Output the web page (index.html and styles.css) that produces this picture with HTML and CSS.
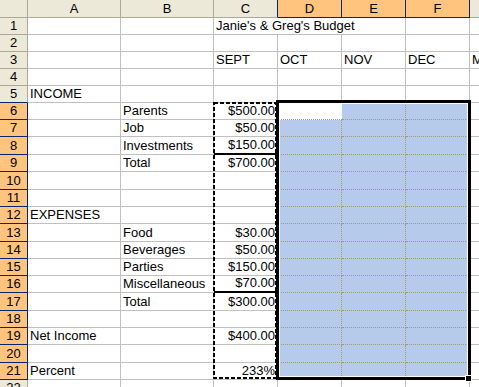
FILE: index.html
```html
<!DOCTYPE html>
<html lang="en">
<head>
    <meta charset="UTF-8">
    <title>Janie's &amp; Greg's Budget</title>
    <link rel="stylesheet" href="styles.css">
</head>
<body>
    <div class="sheet">
        <!-- column headers -->
        <div class="row head">
            <div class="rh corner"></div>
            <div class="ch">A</div>
            <div class="ch">B</div>
            <div class="ch edge">C</div>
            <div class="ch on">D</div>
            <div class="ch on">E</div>
            <div class="ch on">F</div>
            <div class="ch"></div>
        </div>

        <div class="row">
            <div class="rh">1</div>
            <div class="cell"></div>
            <div class="cell"></div>
            <div class="cell wide">Janie's &amp; Greg's Budget</div>
            <div class="cell"></div>
            <div class="cell"></div>
        </div>
        <div class="row">
            <div class="rh">2</div>
            <div class="cell"></div><div class="cell"></div><div class="cell"></div>
            <div class="cell"></div><div class="cell"></div><div class="cell"></div><div class="cell"></div>
        </div>
        <div class="row">
            <div class="rh">3</div>
            <div class="cell"></div>
            <div class="cell"></div>
            <div class="cell">SEPT</div>
            <div class="cell">OCT</div>
            <div class="cell">NOV</div>
            <div class="cell">DEC</div>
            <div class="cell">MAR</div>
        </div>
        <div class="row">
            <div class="rh">4</div>
            <div class="cell"></div><div class="cell"></div><div class="cell"></div>
            <div class="cell"></div><div class="cell"></div><div class="cell"></div><div class="cell"></div>
        </div>
        <div class="row">
            <div class="rh edge">5</div>
            <div class="cell">INCOME</div>
            <div class="cell"></div><div class="cell"></div>
            <div class="cell"></div><div class="cell"></div><div class="cell"></div><div class="cell"></div>
        </div>

        <!-- income -->
        <div class="row">
            <div class="rh on">6</div>
            <div class="cell"></div>
            <div class="cell">Parents</div>
            <div class="cell num">$500.00</div>
            <div class="cell active"></div>
            <div class="cell sel"></div>
            <div class="cell sel"></div>
            <div class="cell"></div>
        </div>
        <div class="row">
            <div class="rh on">7</div>
            <div class="cell"></div>
            <div class="cell">Job</div>
            <div class="cell num">$50.00</div>
            <div class="cell sel"></div><div class="cell sel"></div><div class="cell sel"></div>
            <div class="cell"></div>
        </div>
        <div class="row tall">
            <div class="rh on">8</div>
            <div class="cell"></div>
            <div class="cell">Investments</div>
            <div class="cell num total">$150.00</div>
            <div class="cell sel"></div><div class="cell sel"></div><div class="cell sel"></div>
            <div class="cell"></div>
        </div>
        <div class="row">
            <div class="rh on">9</div>
            <div class="cell"></div>
            <div class="cell">Total</div>
            <div class="cell num">$700.00</div>
            <div class="cell sel"></div><div class="cell sel"></div><div class="cell sel"></div>
            <div class="cell"></div>
        </div>
        <div class="row tall">
            <div class="rh on">10</div>
            <div class="cell"></div><div class="cell"></div><div class="cell"></div>
            <div class="cell sel"></div><div class="cell sel"></div><div class="cell sel"></div>
            <div class="cell"></div>
        </div>
        <div class="row">
            <div class="rh on">11</div>
            <div class="cell"></div><div class="cell"></div><div class="cell"></div>
            <div class="cell sel"></div><div class="cell sel"></div><div class="cell sel"></div>
            <div class="cell"></div>
        </div>

        <!-- expenses -->
        <div class="row">
            <div class="rh on">12</div>
            <div class="cell">EXPENSES</div>
            <div class="cell"></div><div class="cell"></div>
            <div class="cell sel"></div><div class="cell sel"></div><div class="cell sel"></div>
            <div class="cell"></div>
        </div>
        <div class="row tall">
            <div class="rh on">13</div>
            <div class="cell"></div>
            <div class="cell">Food</div>
            <div class="cell num">$30.00</div>
            <div class="cell sel"></div><div class="cell sel"></div><div class="cell sel"></div>
            <div class="cell"></div>
        </div>
        <div class="row">
            <div class="rh on">14</div>
            <div class="cell"></div>
            <div class="cell">Beverages</div>
            <div class="cell num">$50.00</div>
            <div class="cell sel"></div><div class="cell sel"></div><div class="cell sel"></div>
            <div class="cell"></div>
        </div>
        <div class="row">
            <div class="rh on">15</div>
            <div class="cell"></div>
            <div class="cell">Parties</div>
            <div class="cell num">$150.00</div>
            <div class="cell sel"></div><div class="cell sel"></div><div class="cell sel"></div>
            <div class="cell"></div>
        </div>
        <div class="row">
            <div class="rh on">16</div>
            <div class="cell"></div>
            <div class="cell">Miscellaneous</div>
            <div class="cell num total">$70.00</div>
            <div class="cell sel"></div><div class="cell sel"></div><div class="cell sel"></div>
            <div class="cell"></div>
        </div>
        <div class="row tall">
            <div class="rh on">17</div>
            <div class="cell"></div>
            <div class="cell">Total</div>
            <div class="cell num">$300.00</div>
            <div class="cell sel"></div><div class="cell sel"></div><div class="cell sel"></div>
            <div class="cell"></div>
        </div>
        <div class="row">
            <div class="rh on">18</div>
            <div class="cell"></div><div class="cell"></div><div class="cell"></div>
            <div class="cell sel"></div><div class="cell sel"></div><div class="cell sel"></div>
            <div class="cell"></div>
        </div>
        <div class="row">
            <div class="rh on">19</div>
            <div class="cell">Net Income</div>
            <div class="cell"></div>
            <div class="cell num">$400.00</div>
            <div class="cell sel"></div><div class="cell sel"></div><div class="cell sel"></div>
            <div class="cell"></div>
        </div>
        <div class="row tall">
            <div class="rh on">20</div>
            <div class="cell"></div><div class="cell"></div><div class="cell"></div>
            <div class="cell sel"></div><div class="cell sel"></div><div class="cell sel"></div>
            <div class="cell"></div>
        </div>
        <div class="row">
            <div class="rh on">21</div>
            <div class="cell">Percent</div>
            <div class="cell"></div>
            <div class="cell num">233%</div>
            <div class="cell sel"></div><div class="cell sel"></div><div class="cell sel"></div>
            <div class="cell"></div>
        </div>
        <div class="row">
            <div class="rh">22</div>
            <div class="cell"></div><div class="cell"></div><div class="cell"></div>
            <div class="cell"></div><div class="cell"></div><div class="cell"></div><div class="cell"></div>
        </div>

        <!-- copy range C6:C21 (marching ants) -->
        <svg class="copy-range" width="64" height="277" viewBox="0 0 64 277">
            <rect x="1" y="1" width="62" height="275" fill="none" stroke="#000" stroke-width="2" stroke-dasharray="4 2"/>
        </svg>

        <!-- selection D6:F21 -->
        <div class="selection"></div>
        <div class="fill-handle"></div>
    </div>
</body>
</html>
```

FILE: styles.css
```css
/* sheet */
body {
    margin: 0;
    background: #fff;
    overflow: hidden;
}

.sheet {
    position: relative;
    width: 479px;
    height: 387px;
    overflow: hidden;
    font-family: 'Liberation Sans', Arial, sans-serif;
    font-size: 13px;
    color: #000;
}

.row {
    display: grid;
    grid-template-columns: 28px 93px 93px 64px 64px 64px 64px 40px;
    height: 17px;
}

.row.tall {
    height: 18px;
}

.row.head {
    height: 18px;
}

.row > div {
    box-sizing: border-box;
    line-height: 16px;
    white-space: nowrap;
    display: flex;
    align-items: flex-end;
}

/* headers */
.rh,
.ch {
    background-color: #ECE9D8;
    border-right: 1px solid #ACA899;
    border-bottom: 1px solid #ACA899;
    justify-content: center;
}

.rh.on,
.ch.on {
    background-color: #FFC47E;
    border-right-color: #0A246A;
    border-bottom-color: #0A246A;
}

.ch.edge {
    border-right-color: #0A246A;
}

.rh.edge {
    border-bottom-color: #0A246A;
}

/* cells */
.cell {
    border-right: 1px solid #C0C0C0;
    border-bottom: 1px solid #C0C0C0;
    padding: 0 2px;
    overflow: hidden;
}

.cell.wide {
    grid-column: span 3;
}

.cell.num {
    justify-content: flex-end;
}

.cell.total {
    border-bottom: 2px solid #000;
}

/* selected range: gridlines show through as dots */
.cell.sel {
    background-color: #B6CBEC;
    border-right: 1px dotted #A6997A;
    border-bottom: 1px dotted #A6997A;
}

.cell.active {
    background-color: #fff;
    border-right: none;
    border-bottom: 1px dotted #A6997A;
}

/* overlays */
.copy-range {
    position: absolute;
    left: 213px;
    top: 102px;
}

.selection {
    position: absolute;
    left: 276px;
    top: 100px;
    width: 195px;
    height: 280px;
    box-sizing: border-box;
    border: 3px solid #000;
    box-shadow: inset 0 0 0 1px #fff;
}

.fill-handle {
    position: absolute;
    left: 465px;
    top: 375px;
    width: 5px;
    height: 5px;
    background: #000;
    border: 1px solid #fff;
}
```
